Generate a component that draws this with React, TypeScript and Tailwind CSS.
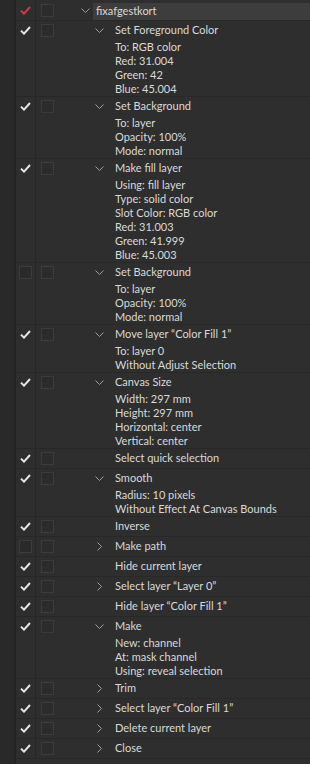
import { ReactNode } from 'react';

interface Step {
  title: string;
  params?: string[];
  open?: boolean;
  enabled?: boolean;
}

const steps: Step[] = [
  { title: 'Set Foreground Color', open: true, params: ['To: RGB color', 'Red: 31.004', 'Green: 42', 'Blue: 45.004'] },
  { title: 'Set Background', open: true, params: ['To: layer', 'Opacity: 100%', 'Mode: normal'] },
  {
    title: 'Make fill layer',
    open: true,
    params: ['Using: fill layer', 'Type: solid color', 'Slot Color: RGB color', 'Red: 31.003', 'Green: 41.999', 'Blue: 45.003'],
  },
  { title: 'Set Background', open: true, enabled: false, params: ['To: layer', 'Opacity: 100%', 'Mode: normal'] },
  { title: 'Move layer \u201cColor Fill 1\u201d', open: true, params: ['To: layer 0', 'Without Adjust Selection'] },
  { title: 'Canvas Size', open: true, params: ['Width: 297 mm', 'Height: 297 mm', 'Horizontal: center', 'Vertical: center'] },
  { title: 'Select quick selection' },
  { title: 'Smooth', open: true, params: ['Radius: 10 pixels', 'Without Effect At Canvas Bounds'] },
  { title: 'Inverse' },
  { title: 'Make path', open: false, enabled: false },
  { title: 'Hide current layer' },
  { title: 'Select layer \u201cLayer 0\u201d', open: false },
  { title: 'Hide layer \u201cColor Fill 1\u201d' },
  { title: 'Make', open: true, params: ['New: channel', 'At: mask channel', 'Using: reveal selection'] },
  { title: 'Trim', open: false },
  { title: 'Select layer \u201cColor Fill 1\u201d', open: false },
  { title: 'Delete current layer', open: false },
  { title: 'Close', open: false },
];

function Check({ red }: { red?: boolean }) {
  return (
    <svg width="11" height="9" viewBox="0 0 11 9" fill="none">
      <path d="M1 4.6 L4 7.6 L10 1" stroke={red ? '#d23a44' : '#e6e6e6'} strokeWidth="2" />
    </svg>
  );
}

function EmptyCheck() {
  return <div className="w-[13px] h-[13px] border border-[#3b3b3b] bg-[#2a2a2a]" />;
}

function DialogBox() {
  return <div className="w-[13px] h-[13px] border border-[#3c3c3c] bg-[#2c2c2c]" />;
}

function ChevronDown() {
  return (
    <svg width="9" height="6" viewBox="0 0 9 6" fill="none">
      <path d="M0.5 0.5 L4.5 4.5 L8.5 0.5" stroke="#9c9c9c" strokeWidth="1" />
    </svg>
  );
}

function ChevronRight() {
  return (
    <svg width="6" height="9" viewBox="0 0 6 9" fill="none">
      <path d="M0.5 0.5 L4.5 4.5 L0.5 8.5" stroke="#9c9c9c" strokeWidth="1" />
    </svg>
  );
}

function Controls({ check }: { check: ReactNode }) {
  return (
    <>
      <div className="w-5 shrink-0 border-r border-[#262626]">
        <div className="h-[19px] flex items-center justify-center">{check}</div>
      </div>
      <div className="w-6 shrink-0">
        <div className="h-[19px] flex items-center pl-[5px]">
          <DialogBox />
        </div>
      </div>
    </>
  );
}

export default function App() {
  return (
    <div
      className="w-[310px] h-[764px] overflow-hidden bg-[#2e2e2e] flex text-[11px] text-[#d9d9d9]"
      style={{ fontFamily: 'Lato, "Noto Sans", sans-serif' }}
    >
      <div className="w-4 shrink-0 bg-[#292929] border-r-2 border-[#232323]" />
      <div className="flex-1 flex flex-col min-w-0 pt-[1px]">
        {/* action set row */}
        <div className="flex border-b border-[#282828]">
          <Controls check={<Check red />} />
          <div className="flex-1 flex items-center h-[19px]">
            <div className="w-[21px] shrink-0" />
            <ChevronDown />
            <div className="ml-[3px] flex-1 h-[17px] mt-[2px] bg-[#3d3d3d] flex items-center pl-[3px]">fixafgestkort</div>
          </div>
        </div>

        {steps.map((s, i) => (
          <div key={i} className="flex border-b border-[#282828]">
            <Controls check={s.enabled === false ? <EmptyCheck /> : <Check />} />
            <div className="flex-1 min-w-0">
              <div className="h-[19px] flex items-center">
                <div className="w-[35px] shrink-0" />
                <div className="w-[9px] shrink-0 flex justify-center">
                  {s.open === true && <ChevronDown />}
                  {s.open === false && <ChevronRight />}
                </div>
                <span className="ml-[11px] whitespace-nowrap">{s.title}</span>
              </div>
              {s.params && (
                <div className="pl-[55px]">
                  {s.params.map((p, j) => (
                    <div key={j} className="h-[14px] leading-[14px] whitespace-nowrap">
                      {p}
                    </div>
                  ))}
                </div>
              )}
            </div>
          </div>
        ))}
      </div>
    </div>
  );
}
